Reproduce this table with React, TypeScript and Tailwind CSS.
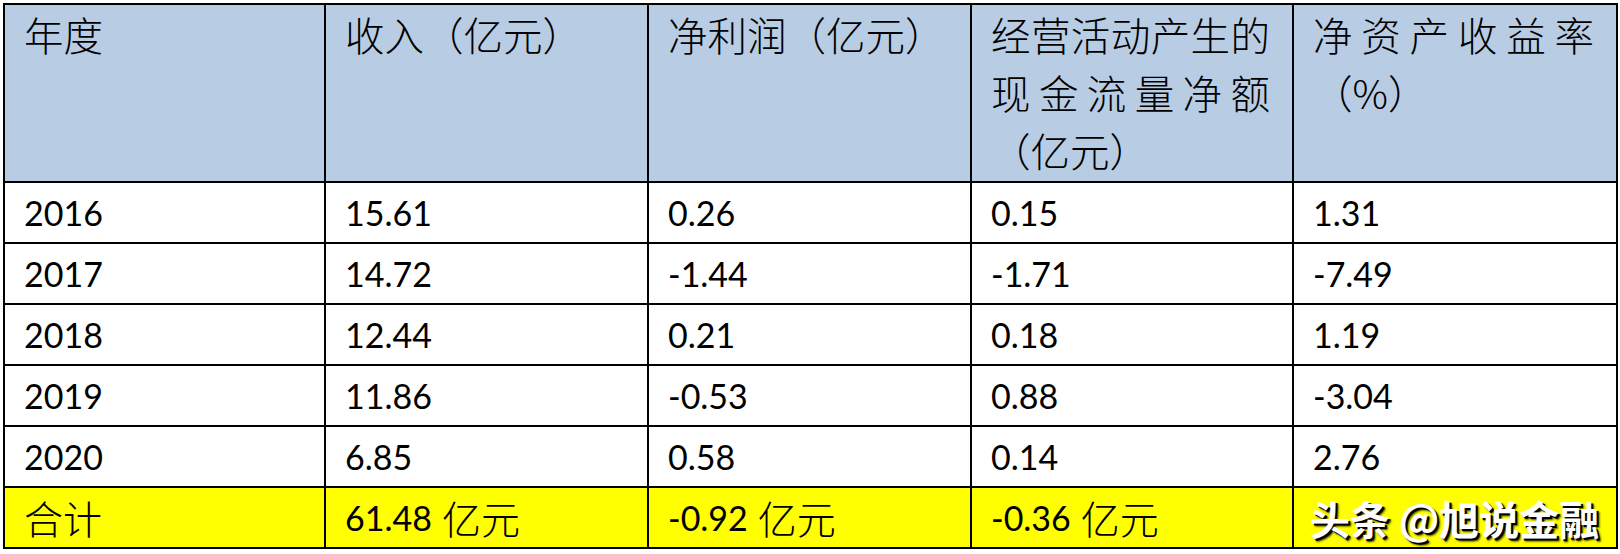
import React from 'react';

const cjk = "font-['Noto_Sans_CJK_SC',sans-serif]";
const num = "font-['Lato','Noto_Sans_CJK_SC',sans-serif]";

const rows = [
  ['2016', '15.61', '0.26', '0.15', '1.31'],
  ['2017', '14.72', '-1.44', '-1.71', '-7.49'],
  ['2018', '12.44', '0.21', '0.18', '1.19'],
  ['2019', '11.86', '-0.53', '0.88', '-3.04'],
  ['2020', '6.85', '0.58', '0.14', '2.76'],
];

const cell = 'border-r-2 border-b-2 border-black pl-[19px] pr-[22px]';
const head = `${cell} ${cjk} bg-[#b8cce4] text-[39.5px] font-light leading-[58px]`;
const fill = '[text-align-last:justify] text-justify whitespace-nowrap';

const Amount: React.FC<{ value: string }> = ({ value }) => (
  <div className={`${cell} relative flex items-center bg-[#ffff00] text-black`}>
    <span className={`${num} text-[34px] leading-none`}>{value}</span>
    <span className={`${cjk} ml-[10px] text-[39px] font-light leading-none`}>亿元</span>
  </div>
);

export default function App() {
  return (
    <div className="min-h-[554px] w-[1620px] bg-white">
      <div className="ml-[3px] mt-[3px] grid w-max grid-cols-[321px_323px_323px_322px_324px] grid-rows-[178px_repeat(6,61px)] border-l-2 border-t-2 border-black text-black">
        {/* header */}
        <div className={head}>年度</div>
        <div className={`${head} whitespace-nowrap`}>收入（亿元）</div>
        <div className={`${head} whitespace-nowrap`}>净利润（亿元）</div>
        <div className={head}>
          <div className={fill}>经营活动产生的</div>
          <div className={fill}>现金流量净额</div>
          <div className="whitespace-nowrap">（亿元）</div>
        </div>
        <div className={head}>
          <div className={fill}>净资产收益率</div>
          <div className="whitespace-nowrap">（%）</div>
        </div>

        {/* data */}
        {rows.map((r) =>
          r.map((v, i) => (
            <div key={`${r[0]}-${i}`} className={`${cell} ${num} flex items-center bg-white text-[34px] leading-none`}>
              {v}
            </div>
          ))
        )}

        {/* total */}
        <div className={`${cell} ${cjk} flex items-center bg-[#ffff00] text-[39px] font-light leading-none`}>合计</div>
        <Amount value="61.48" />
        <Amount value="-0.92" />
        <Amount value="-0.36" />
        <div className={`${cell} relative bg-[#ffff00]`}>
          <div
            className={`${cjk} absolute inset-y-0 left-[16px] flex items-center whitespace-nowrap text-[40px] font-bold leading-none text-white [text-shadow:2px_2px_0_#000,3px_3px_2px_rgba(0,0,0,0.7)]`}
          >
            头条 @旭说金融
          </div>
        </div>
      </div>
    </div>
  );
}
